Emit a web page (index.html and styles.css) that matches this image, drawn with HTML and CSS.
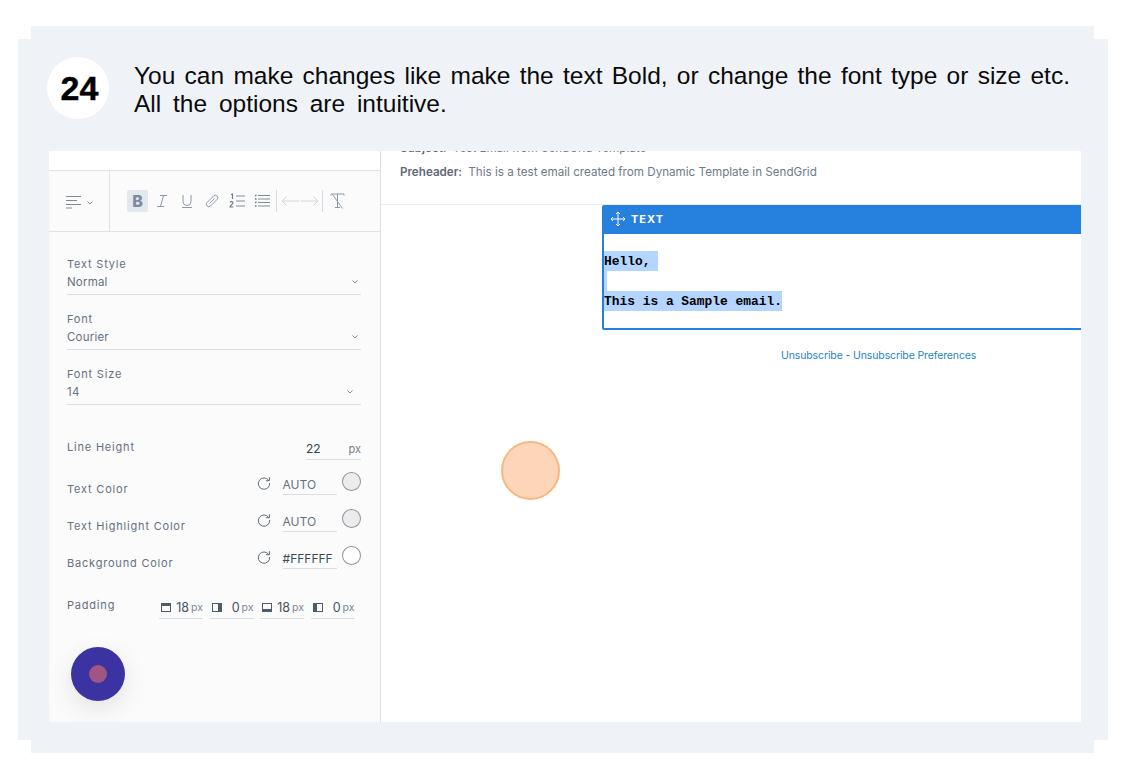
FILE: index.html
```html
<!DOCTYPE html>
<html lang="en">
<head>
<meta charset="utf-8">
<title>Step 24</title>
<link rel="stylesheet" href="styles.css">
</head>
<body>
<div class="frame">
  <header class="step">
    <div class="step-num">24</div>
    <div class="step-text">
      <p class="line-full">You can make changes like make the text Bold, or change the font type or size etc.</p>
      <p class="line-last">All the options are intuitive.</p>
    </div>
  </header>
  <div class="panel">
    <aside class="side">
      <div class="side-top"></div>
      <div class="toolbar">
        <div class="align-cell">
          <svg class="ic-align" width="15" height="14" viewBox="0 0 15 14"><path d="M0 1.500h15M0 5.500h11M0 9.500h15M0 13h6" stroke="#7f8b99" stroke-width="1"/></svg>
          <svg class="chev" width="6" height="4" viewBox="0 0 6 4"><path d="M.5.5 3 3 5.500.5" fill="none" stroke="#7f8b99"/></svg>
        </div>
        <div class="tools">
          <span class="tool-b">B</span>
          <svg class="tool" width="16" height="16" viewBox="0 0 16 16"><path d="M6 2.500h7M3 13.500h7M9.500 2.500 6.500 13.500" fill="none" stroke="#8d97a5"/></svg>
          <svg class="tool" width="16" height="16" viewBox="0 0 16 16"><path d="M4 2v6.500a4 4 0 0 0 8 0V2M3 14.500h10" fill="none" stroke="#8d97a5"/></svg>
          <svg class="tool" width="16" height="16" viewBox="0 0 16 16"><path d="M9.500 3 3 9.500a2.400 2.400 0 0 0 3.500 3.500L13 6.500A2.400 2.400 0 0 0 9.500 3ZM5.500 10.500 10.500 5.500" fill="none" stroke="#8d97a5"/></svg>
          <svg class="tool" width="16" height="16" viewBox="0 0 16 16"><path d="M7 3h9M7 8h9M7 13h9" stroke="#7f8b99" stroke-width="1.200"/><path d="M2 1.500 3.500 1v5M1 9.500c1-1.500 3.200-1 3 .5-.2 1-3 2.500-3 4h3.500" fill="none" stroke="#6f7c8b" stroke-width="1.200"/></svg>
          <svg class="tool" width="16" height="16" viewBox="0 0 16 16"><path d="M4 2.500h12M4 6h12M4 9.500h12M4 13h12" stroke="#7f8b99" stroke-width="1.200"/><path d="M1 2.500h1.500M1 6h1.500M1 9.500h1.500M1 13h1.500" stroke="#6f7c8b" stroke-width="1.400"/></svg>
          <span class="tool-sep"></span>
          <svg class="arrows" width="38" height="12" viewBox="0 0 38 12"><path d="M18.500 6H1M5.500 1.500 1 6l4.500 4.500M20 6h17M32.500 1.500 37 6l-4.500 4.500" fill="none" stroke="#d0d5db"/></svg>
          <span class="tool-sep"></span>
          <svg class="tool-x" width="15" height="17" viewBox="0 0 15 17"><path d="M1 2.500V1h13v1.500M7.500 1v13M5 14.500h5M2.500 1.500 12.500 15.500" fill="none" stroke="#8d97a5"/></svg>
        </div>
      </div>
      <div class="form">
        <div class="select-row">
          <div class="label">Text Style</div>
          <div class="select"><span>Normal</span><svg width="6" height="4" viewBox="0 0 6 4"><path d="M.5.5 3 3 5.500.5" fill="none" stroke="#7f8b99"/></svg></div>
        </div>
        <div class="select-row">
          <div class="label">Font</div>
          <div class="select"><span>Courier</span><svg width="6" height="4" viewBox="0 0 6 4"><path d="M.5.5 3 3 5.500.5" fill="none" stroke="#7f8b99"/></svg></div>
        </div>
        <div class="select-row">
          <div class="label">Font Size</div>
          <div class="select select-size"><span>14</span><svg width="6" height="4" viewBox="0 0 6 4"><path d="M.5.5 3 3 5.500.5" fill="none" stroke="#7f8b99"/></svg></div>
        </div>
        <div class="lh-row">
          <div class="label">Line Height</div>
          <div class="lh-input"><span class="val">22</span><span class="unit">px</span></div>
        </div>
        <div class="color-row">
          <div class="label">Text Color</div>
          <svg class="reset" width="14" height="14" viewBox="0 0 14 14"><path d="M11.800 4.500A5.700 5.700 0 1 0 12.700 7M12.500 1.200v3.500H9" fill="none" stroke="#5f6b78"/></svg>
          <div class="color-input">AUTO</div>
          <span class="swatch swatch-auto"></span>
        </div>
        <div class="color-row">
          <div class="label">Text Highlight Color</div>
          <svg class="reset" width="14" height="14" viewBox="0 0 14 14"><path d="M11.800 4.500A5.700 5.700 0 1 0 12.700 7M12.500 1.200v3.500H9" fill="none" stroke="#5f6b78"/></svg>
          <div class="color-input">AUTO</div>
          <span class="swatch swatch-auto"></span>
        </div>
        <div class="color-row">
          <div class="label">Background Color</div>
          <svg class="reset" width="14" height="14" viewBox="0 0 14 14"><path d="M11.800 4.500A5.700 5.700 0 1 0 12.700 7M12.500 1.200v3.500H9" fill="none" stroke="#5f6b78"/></svg>
          <div class="color-input dark">#FFFFFF</div>
          <span class="swatch"></span>
        </div>
        <div class="pad-row">
          <div class="label">Padding</div>
          <div class="pad-group">
            <div class="pad-item"><svg width="10" height="9" viewBox="0 0 10 9"><rect x=".5" y=".5" width="9" height="8" fill="none" stroke="#4f5b68"/><rect width="10" height="3" fill="#4f5b68"/></svg><b>18</b><i>px</i></div>
            <div class="pad-item"><svg width="10" height="9" viewBox="0 0 10 9"><rect x=".5" y=".5" width="9" height="8" fill="none" stroke="#4f5b68"/><rect x="6" width="4" height="9" fill="#4f5b68"/></svg><b>0</b><i>px</i></div>
            <div class="pad-item"><svg width="10" height="9" viewBox="0 0 10 9"><rect x=".5" y=".5" width="9" height="8" fill="none" stroke="#4f5b68"/><rect y="6" width="10" height="3" fill="#4f5b68"/></svg><b>18</b><i>px</i></div>
            <div class="pad-item"><svg width="10" height="9" viewBox="0 0 10 9"><rect x=".5" y=".5" width="9" height="8" fill="none" stroke="#4f5b68"/><rect width="4" height="9" fill="#4f5b68"/></svg><b>0</b><i>px</i></div>
          </div>
        </div>
      </div>
      <div class="fab"><span class="fab-dot"></span></div>
    </aside>
    <main class="main">
      <div class="meta">
        <p class="subject"><strong>Subject:</strong> Test Email from SendGrid Template</p>
        <p class="preheader"><strong>Preheader:</strong> This is a test email created from Dynamic Template in SendGrid</p>
      </div>
      <section class="block">
        <div class="block-head">
          <svg width="16" height="16" viewBox="0 0 16 16"><path d="M8 1v14M1 8h14M6 3l2-2 2 2M6 13l2 2 2-2M3 6 1 8l2 2M13 6l2 2-2 2" fill="none" stroke="#fff"/></svg>
          <span>TEXT</span>
        </div>
        <div class="block-body">
          <div class="sel sel-hello">Hello,</div>
          <div class="sel sel-gap"></div>
          <div class="sel">This is a Sample email.</div>
        </div>
      </section>
      <p class="unsub"><a>Unsubscribe</a> - <a>Unsubscribe Preferences</a></p>
    </main>
    <div class="touch"></div>
  </div>
</div>
</body>
</html>
```
FILE: styles.css
```css
* { box-sizing: border-box; }
html, body { margin: 0; padding: 0; background: #fff; }
body { height: 778px; overflow: hidden; font-family: "Inter", "Liberation Sans", sans-serif; }
p { margin: 0; }

.frame {
  position: relative;
  width: 1090px;
  height: 727px;
  margin: 26px 0 0 18px;
  background: #eff3f8;
  clip-path: polygon(13px 0, 1076px 0, 1076px 13px, 100% 13px, 100% 714px, 1076px 714px, 1076px 100%, 13px 100%, 13px 714px, 0 714px, 0 13px, 13px 13px);
}

.step { display: flex; height: 125px; padding: 31px 0 0 29px; }
.step-num {
  flex: none; width: 62px; height: 62px; padding-left: 3px; border-radius: 50%; background: #fff;
  font: bold 34px/63px "Liberation Sans", Arial, sans-serif; color: #000; text-align: center;
  -webkit-text-stroke: .4px #000;
  margin-right: 25px;
}
.step-text {
  width: 936px; margin-top: 5px;
  font: 24.500px/28px "Liberation Sans", Arial, sans-serif; color: #0a0a0a;
}
.line-full { text-align: justify; text-align-last: justify; }
.line-last { word-spacing: 5px; }

.panel { position: relative; display: flex; height: 571px; margin: 0 27px 0 31px; background: #fff; overflow: hidden; }

.side { position: relative; flex: none; width: 332px; display: flex; flex-direction: column; border-right: 1px solid #dcdfe4; background: #fbfbfc; }
.side-top { flex: none; height: 20px; background: #fff; border-bottom: 1px solid #dfe2e7; }
.toolbar { flex: none; display: flex; height: 61px; border-bottom: 1px solid #dfe2e7; }
.align-cell { width: 61px; border-right: 1px solid #dfe2e7; display: flex; align-items: center; padding: 0 0 0 17px; gap: 6px; }
.ic-align { margin-top: 1px; }
.chev { margin-top: 3px; }
.tools { display: flex; align-items: center; padding-left: 17px; gap: 9px; }
.tool-b {
  width: 21px; height: 22px; margin-right: -3px; background: #e3e8ee; border-radius: 2px;
  font: 800 16px/22px "Inter", "Liberation Sans", sans-serif; color: #7c8ba0; text-align: center;
}
.tool-sep { width: 1px; height: 22px; background: #d7dbe0; margin: 0 -4px 0 -3px; }
.arrows { margin: 0 -3px 0 -1px; }
.tool-x { margin-left: 2px; }

.form { padding: 24px 19px 0 18px; font-size: 11px; }
.label { font-size: 11px; line-height: 16px; letter-spacing: .8px; color: #66717e; white-space: nowrap; }
.select-row { height: 55px; }
.select {
  display: flex; align-items: center; justify-content: space-between;
  height: 23px; padding: 0 3px 3px 0; border-bottom: 1px solid #d9dde2;
  font-size: 11.500px; color: #66717e; letter-spacing: .2px;
}
.select-size svg { margin-right: 5px; }
.lh-row { display: flex; justify-content: space-between; height: 39px; margin-top: 15px; }
.lh-row .label { margin-top: 3px; }
.lh-input { display: flex; justify-content: space-between; align-items: flex-end; width: 55px; height: 24px; padding-bottom: 3px; border-bottom: 1px solid #d9dde2; }
.val { font-size: 12px; color: #30404f; }
.unit { font-size: 11px; color: #75808c; }

.color-row { display: flex; align-items: flex-start; height: 37px; position: relative; }
.color-row .label { width: 191px; margin-top: 6px; }
.reset { margin-top: 1px; }
.color-input { width: 55px; height: 20px; margin-left: 12px; border-bottom: 1px solid #d9dde2; font-size: 12px; line-height: 19px; color: #66717e; }
.color-input.dark { color: #3c4a58; letter-spacing: 0; white-space: nowrap; }
.swatch { width: 19px; height: 19px; margin: -3px 0 0 5px; border-radius: 50%; border: 1px solid #8d949c; background: #fff; }
.swatch-auto { background: #ececec; }

.pad-row { display: flex; height: 30px; margin-top: 9px; }
.pad-row .label { width: 92px; margin-top: 2px; }
.pad-group { display: flex; gap: 6.500px; margin-top: 2px; }
.pad-item { display: flex; align-items: center; width: 44px; height: 22px; padding: 0 0 0 2px; border-bottom: 1px solid #d9dde2; }
.pad-item b { flex: 1; font-weight: 400; font-size: 12.500px; color: #45525f; text-align: right; padding-right: 2px; }
.pad-item i { font-style: normal; font-size: 10.500px; color: #7c8792; }

.fab { position: absolute; left: 22px; top: 496px; width: 54px; height: 54px; border-radius: 50%; background: #3b33a1; display: flex; align-items: center; justify-content: center; box-shadow: 0 8px 24px rgba(0,0,0,.1); }
.fab-dot { width: 18px; height: 18px; border-radius: 50%; background: #a05583; }

.main { flex: 1; min-width: 0; overflow: hidden; }
.meta { display: flow-root; height: 54px; padding-left: 19px; border-bottom: 1px solid #eceef1; font-size: 11.650px; line-height: 16px; color: #6f7a87; white-space: nowrap; }
.meta strong { font-weight: 600; color: #5d6875; margin-right: 3px; }
.subject { margin-top: -11px; }
.preheader { margin-top: 8px; }

.block { width: 520px; height: 125px; margin-left: 221px; border: 2px solid #2680dd; border-top-width: 1px; border-radius: 2px; background: #fff; }
.block-head { display: flex; align-items: center; gap: 5px; height: 28px; padding: 0 0 3px 6px; background: #2680dd; color: #fff; font-size: 11px; font-weight: 700; letter-spacing: 1px; }
.block-body { padding-top: 17px; font: bold 12.900px/22px "Liberation Mono", "Courier New", monospace; color: #000; }
.sel { width: fit-content; height: 20px; background: #b4d5fe; white-space: pre; }
.sel-hello { width: 54px; }
.sel-gap { width: 3px; }

.unsub { margin: 18px 0 0 0; padding-left: 400px; font-size: 10.500px; letter-spacing: -.12px; line-height: 16px; white-space: nowrap; color: #2b6f9f; }
.unsub a { color: #1f83c6; }

.touch { position: absolute; left: 452px; top: 290px; width: 59px; height: 59px; border-radius: 50%; background: #fdd6ba; border: 2px solid #f8b77f; }
```
